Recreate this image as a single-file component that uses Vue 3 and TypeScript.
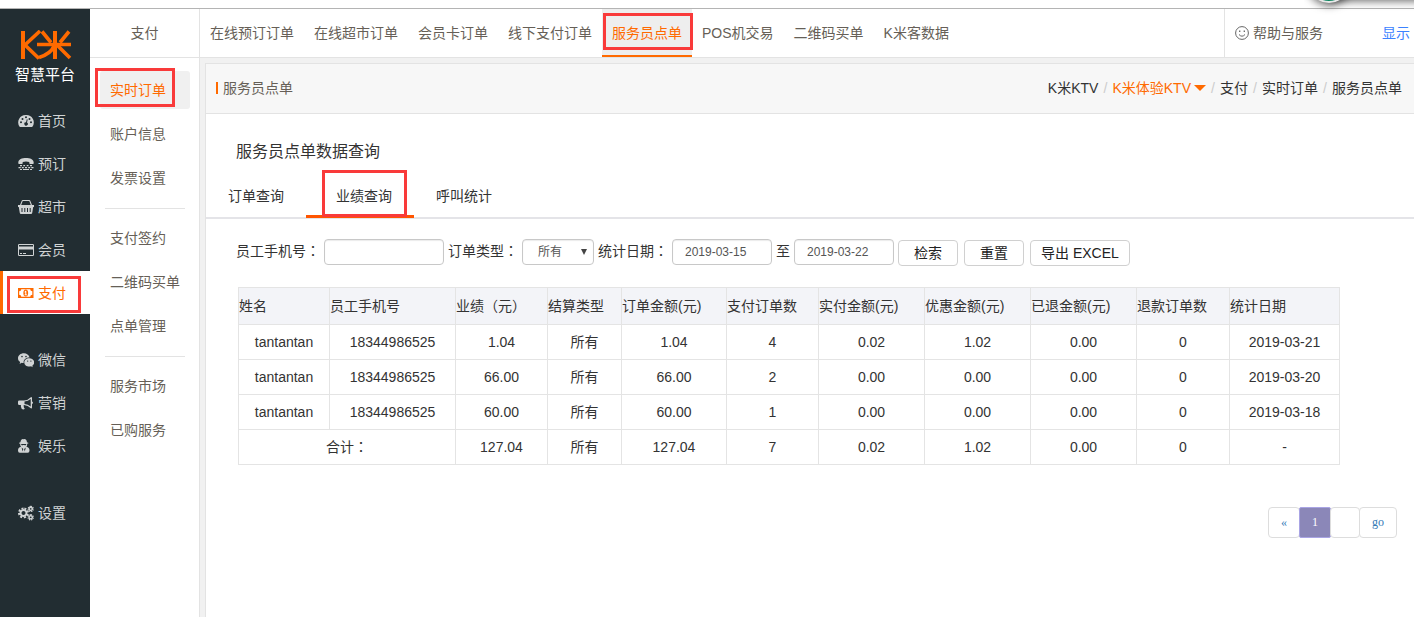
<script setup lang="ts">
import { ref } from 'vue'

interface SideItem { label: string; icon: string; active?: boolean }
interface SubItem { label: string; active?: boolean }

const sideGroups: SideItem[][] = [
  [
    { label: '首页', icon: 'gauge' },
    { label: '预订', icon: 'phone' },
    { label: '超市', icon: 'basket' },
    { label: '会员', icon: 'card' },
    { label: '支付', icon: 'money', active: true },
  ],
  [
    { label: '微信', icon: 'wechat' },
    { label: '营销', icon: 'horn' },
    { label: '娱乐', icon: 'agent' },
  ],
  [{ label: '设置', icon: 'cogs' }],
]

const subGroups: SubItem[][] = [
  [{ label: '实时订单', active: true }, { label: '账户信息' }, { label: '发票设置' }],
  [{ label: '支付签约' }, { label: '二维码买单' }, { label: '点单管理' }],
  [{ label: '服务市场' }, { label: '已购服务' }],
]

const topTabs: SubItem[] = [
  { label: '在线预订订单' },
  { label: '在线超市订单' },
  { label: '会员卡订单' },
  { label: '线下支付订单' },
  { label: '服务员点单', active: true },
  { label: 'POS机交易' },
  { label: '二维码买单' },
  { label: 'K米客数据' },
]

const queryTabs = ['订单查询', '业绩查询', '呼叫统计']
const currentTab = ref('业绩查询')

const phone = ref('')
const orderType = ref('所有')
const dateFrom = ref('2019-03-15')
const dateTo = ref('2019-03-22')
const pageInput = ref('')

const columns = [
  { key: 'name', label: '姓名', wide: false },
  { key: 'phone', label: '员工手机号', wide: false },
  { key: 'result', label: '业绩（元）', wide: true },
  { key: 'type', label: '结算类型', wide: false },
  { key: 'amount', label: '订单金额(元)', wide: false },
  { key: 'paid', label: '支付订单数', wide: false },
  { key: 'real', label: '实付金额(元)', wide: false },
  { key: 'discount', label: '优惠金额(元)', wide: false },
  { key: 'refund', label: '已退金额(元)', wide: false },
  { key: 'refunds', label: '退款订单数', wide: false },
  { key: 'date', label: '统计日期', wide: false },
]

const rows: string[][] = [
  ['tantantan', '18344986525', '1.04', '所有', '1.04', '4', '0.02', '1.02', '0.00', '0', '2019-03-21'],
  ['tantantan', '18344986525', '66.00', '所有', '66.00', '2', '0.00', '0.00', '0.00', '0', '2019-03-20'],
  ['tantantan', '18344986525', '60.00', '所有', '60.00', '1', '0.00', '0.00', '0.00', '0', '2019-03-18'],
]
const totals: string[] = ['127.04', '所有', '127.04', '7', '0.02', '1.02', '0.00', '0', '-']
</script>

<template>
  <div class="page">
    <div class="strip">
      <div class="bubble"><i></i></div>
    </div>
    <div class="shell">
      <aside class="side">
        <div class="logo">
          <svg width="54" height="30" viewBox="0 0 54 30" fill="none" stroke="#ff6a00" stroke-width="4">
            <path d="M5 1v28" />
            <path d="M22 1L8 14q-1 1 0 2l13 12.500" stroke-width="3.600" />
            <path d="M19 14.500h34" stroke-width="3.600" />
            <path d="M37 1v28" />
            <path d="M24 1.500l9 11M51 1.500l-9 11" stroke-width="3.600" />
            <path d="M36 16c-2 5-7 9-15 11.500M39 15l13 13" stroke-width="3.600" />
          </svg>
          <span>智慧平台</span>
        </div>
        <nav class="side-nav">
          <ul v-for="(group, gi) in sideGroups" :key="gi">
            <li v-for="item in group" :key="item.label">
              <a href="#" :class="{ active: item.active }">
                <svg class="ico" width="16" height="16" viewBox="0 0 16 16" fill="currentColor">
                  <template v-if="item.icon === 'gauge'">
                    <path fill-rule="evenodd" d="M8 2a7.400 7.400 0 0 0-6.500 11.500q.3.5.8.5h11.400q.5 0 .8-.5A7.400 7.400 0 0 0 8 2zM3 8.200a1 1 0 1 1 0 2 1 1 0 0 1 0-2zM4.500 4.900a1 1 0 1 1 0 2 1 1 0 0 1 0-2zM8 3.300a1 1 0 1 1 0 2 1 1 0 0 1 0-2zM11.500 4.900a1 1 0 1 1 0 2 1 1 0 0 1 0-2zM13 8.200a1 1 0 1 1 0 2 1 1 0 0 1 0-2zM8.800 6.200l.9.2-.7 3.100a1.700 1.700 0 1 1-1-.3z" />
                  </template>
                  <template v-else-if="item.icon === 'phone'">
                    <path d="M.3 6.800C.3 3.300 4 2 8 2s7.700 1.300 7.700 4.800v.5q0 .7-.7.7h-3q-.7 0-.7-.7V6Q8 5 4.700 6v1.300q0 .7-.7.700H1Q.3 8 .3 7.300z" />
                    <path d="M2 9h2v1.300H2zM5.300 9h1.800v1.300H5.300zM8.700 9h1.800v1.300H8.700zM12 9h2v1.300h-2zM.5 11h2.200v1.300H.5zM3.800 11h2v1.300h-2zM7 11h2v1.300H7zM10.200 11h2v1.300h-2zM13.300 11h2.200v1.300h-2.200zM2 13h2v1H2zM5 13h6v1H5zM12 13h2v1h-2z" />
                  </template>
                  <template v-else-if="item.icon === 'basket'">
                    <path fill-rule="evenodd" d="M0 6h2L3.500 2.200Q3.800 1 5 1h6q1.200 0 1.500 1.200L14 6h2v2h-.8l-1 6q-.2 1-1.200 1H3q-1 0-1.200-1l-1-6H0zm3.200 0h9.600l-1.300-3.400Q11.400 2 11 2H5q-.4 0-.5.600zM3.500 9v4h1V9zM6.300 9v4h1V9zM9 9v4h1V9zM11.700 9v4h1V9z" />
                  </template>
                  <template v-else-if="item.icon === 'card'">
                    <path fill-rule="evenodd" d="M1.300 2h13.400q1.300 0 1.300 1.300v9.400q0 1.300-1.300 1.300H1.300Q0 14 0 12.700V3.300Q0 2 1.300 2zM1 3v1.600h14V3zM1 7.500V13h14V7.500zM2 11h2v1H2zM5 11h3v1H5z" />
                  </template>
                  <template v-else-if="item.icon === 'money'">
                    <path fill-rule="evenodd" d="M0 3h15.500v10H0zM3.300 4.200A2.200 2.200 0 0 1 1.200 6.300v3.400a2.200 2.200 0 0 1 2.100 2.100h8.900a2.200 2.200 0 0 1 2.100-2.100V6.300a2.200 2.200 0 0 1-2.100-2.100z" />
                    <path fill-rule="evenodd" d="M7.750 4.500q2.400 0 2.400 3.500t-2.400 3.500T5.350 8t2.400-3.500zM6.600 6.700v.8h.7v2h-.8v.8h2.600v-.8h-.8V5.700h-.8z" />
                  </template>
                  <template v-else-if="item.icon === 'wechat'">
                    <path fill-rule="evenodd" d="M5.900 1.200C2.600 1.200 0 3.400 0 6.200c0 1.600.8 2.900 2.200 3.800l-.6 1.900 2.100-1.100c.8.2 1.300.3 2 .300-.7-3.200 2-5.800 5.900-5.700C11 3 8.600 1.200 5.900 1.200zM4 3.800a.8.800 0 1 1 0 1.600.8.800 0 0 1 0-1.600zM8 3.800a.8.800 0 1 1 0 1.600.8.800 0 0 1 0-1.600z" />
                    <path fill-rule="evenodd" d="M11.300 6.200c-2.800 0-5 1.900-5 4.200s2.200 4.200 5 4.200c.6 0 1.200-.2 1.700-.3l1.700.9-.4-1.500c1.100-.8 2-2 2-3.300 0-2.300-2.300-4.200-5-4.200zM9.700 8.400a.6.600 0 1 1 0 1.300.6.600 0 0 1 0-1.300zM12.900 8.400a.6.600 0 1 1 0 1.300.6.600 0 0 1 0-1.300z" />
                  </template>
                  <template v-else-if="item.icon === 'horn'">
                    <path fill-rule="evenodd" d="M13.200 2q.8 0 .8 1v3.600q1 .4 1 1.200t-1 1.200v3.500q0 1-.8 1Q9.700 10.500 6 10.100q-.9.700-.1 1.700-.5.700.9 1.900-1 1.200-3 .3Q2.500 11.500 2.900 10H1.200Q0 10 0 8.800V6.800Q0 5.500 1.200 5.500H6Q9.700 5.500 13.200 2zM12.700 4Q9.900 6.200 6.500 6.600v2.500q3.500.3 6.200 2.500z" />
                  </template>
                  <template v-else-if="item.icon === 'agent'">
                    <path fill-rule="evenodd" d="M3.600 1.500q1-.8 2.100-.2 1.100-.6 2.100.2.900.9 1.200 2.700 1.500.4 1.500.8t-1.300.8q.2 2-.8 3Q11.500 9.500 11.500 12.500q0 2.200-1.800 2.200H1.800Q0 14.700 0 12.500 0 9.500 3 8.800 2 7.800 2.200 5.800.9 5.400.9 5t1.500-.8q.3-1.800 1.200-2.700zM3.200 6v.7q1 1.100 2 .2h1q1 .9 2-.2V6zM3.600 9.600l1 4 .7-2.600zM7.800 9.600L6.100 11l.7 2.600z" />
                  </template>
                  <template v-else>
                    <path fill="none" stroke="currentColor" stroke-width="2" d="M5.500 5a3 3 0 1 0 .01 0z" />
                    <path fill="none" stroke="currentColor" stroke-width="2" stroke-dasharray="2 1.530" d="M5.500 3.500a4.500 4.500 0 1 0 .01 0z" />
                    <path fill="none" stroke="currentColor" stroke-width="1.400" d="M12.700 2.300a1.600 1.600 0 1 0 .01 0zM12.700 10.700a1.600 1.600 0 1 0 .01 0z" />
                    <path fill="none" stroke="currentColor" stroke-width="1.200" stroke-dasharray="1.200 .84" d="M12.700 1.300a2.600 2.600 0 1 0 .01 0zM12.700 9.700a2.600 2.600 0 1 0 .01 0z" />
                  </template>
                </svg>
                <span>{{ item.label }}</span>
              </a>
            </li>
          </ul>
        </nav>
      </aside>

      <aside class="sub">
        <h2>支付</h2>
        <nav>
          <ul v-for="(group, gi) in subGroups" :key="gi">
            <li v-for="item in group" :key="item.label">
              <a href="#" :class="{ active: item.active }">{{ item.label }}</a>
            </li>
          </ul>
        </nav>
      </aside>

      <div class="main">
        <header class="top">
          <nav>
            <a v-for="t in topTabs" :key="t.label" href="#" :class="{ active: t.active }">{{ t.label }}</a>
          </nav>
          <div class="help">
            <a href="#" class="help-link">
              <svg width="14" height="14" viewBox="0 0 14 14" fill="none" stroke="#666" stroke-width="1">
                <circle cx="7" cy="7" r="6.400" />
                <path d="M4 8.500q3 3.400 6 0" />
                <path d="M4.700 4.500v1.400M9.300 4.500v1.400" stroke-width="1.300" />
              </svg>
              帮助与服务
            </a>
            <a href="#" class="show">显示</a>
          </div>
        </header>

        <section class="panel">
          <div class="panel-head">
            <h1>服务员点单</h1>
            <nav class="crumbs">
              <a href="#">K米KTV</a><i>/</i>
              <a href="#" class="hot">K米体验KTV<b></b></a><i>/</i>
              <a href="#">支付</a><i>/</i>
              <a href="#">实时订单</a><i>/</i>
              <a href="#">服务员点单</a>
            </nav>
          </div>

          <h3>服务员点单数据查询</h3>
          <div class="tabs">
            <button
              v-for="t in queryTabs"
              :key="t"
              type="button"
              :class="{ active: t === currentTab }"
              @click="currentTab = t"
            >{{ t }}</button>
          </div>

          <form class="filters" @submit.prevent>
            <label for="phone">员工手机号<span class="colon">：</span></label>
            <input id="phone" v-model="phone" class="phone" type="text" />
            <label for="type">订单类型<span class="colon">：</span></label>
            <div class="select">
              <select id="type" v-model="orderType">
                <option>所有</option>
              </select>
            </div>
            <label for="from">统计日期<span class="colon">：</span></label>
            <input id="from" v-model="dateFrom" type="text" />
            <label for="to">至</label>
            <input id="to" v-model="dateTo" type="text" />
            <div class="actions">
              <button type="submit">检索</button>
              <button type="reset">重置</button>
              <button type="button">导出 EXCEL</button>
            </div>
          </form>

          <div class="grid">
            <table>
              <colgroup>
                <col v-for="c in columns" :key="c.key" :class="'c-' + c.key" />
              </colgroup>
              <thead>
                <tr>
                  <th v-for="c in columns" :key="c.key" scope="col" :class="{ centred: c.wide }">{{ c.label }}</th>
                </tr>
              </thead>
              <tbody>
                <tr v-for="(r, ri) in rows" :key="ri">
                  <td v-for="(v, vi) in r" :key="vi">{{ v }}</td>
                </tr>
                <tr>
                  <td colspan="2">合计<span class="colon">：</span></td>
                  <td v-for="(v, vi) in totals" :key="vi">{{ v }}</td>
                </tr>
              </tbody>
            </table>
          </div>

          <div class="pager">
            <button type="button">«</button>
            <button type="button" class="current">1</button>
            <input v-model="pageInput" type="text" aria-label="页码" />
            <button type="button" class="go">go</button>
          </div>
        </section>
      </div>
    </div>
  </div>
</template>

<style>
html,
body,
#app {
  height: 100%;
}
body {
  margin: 0;
  background: #fff;
}
</style>

<style scoped>
* {
  box-sizing: border-box;
}
.page {
  min-height: 100%;
  display: flex;
  flex-direction: column;
  font: 14px/20px "Liberation Sans", "Noto Sans CJK SC", sans-serif;
  color: #333;
}
ul {
  list-style: none;
  margin: 0;
  padding: 0;
}
h1,
h2,
h3 {
  margin: 0;
  font-weight: normal;
  font-size: 14px;
}
a {
  color: inherit;
  text-decoration: none;
}
button,
input,
select {
  font-family: inherit;
  margin: 0;
}
.strip {
  position: relative;
  height: 9px;
  border-bottom: 1px solid #b4b4b4;
}
.bubble {
  position: absolute;
  z-index: 2;
  top: 0;
  right: 0;
  width: 110px;
  height: 16px;
  overflow: hidden;
}
.bubble::before {
  content: "";
  position: absolute;
  top: -10px;
  left: 24px;
  right: -10px;
  height: 10px;
  box-shadow: 0 0 8px 1px rgba(0, 0, 0, 0.6);
}
.bubble i {
  position: absolute;
  left: 4px;
  top: -39px;
  width: 42px;
  height: 42px;
  border-radius: 50%;
  background: #0e8560;
  border: 2px solid #e8e8e8;
  box-shadow: 0 1px 8px 1px rgba(0, 0, 0, 0.6);
}
.shell {
  flex: 1;
  display: flex;
}
.side {
  width: 90px;
  flex: none;
  background: #222d32;
  color: #d0d3d4;
}
.logo {
  height: 90px;
  padding-top: 21px;
  display: flex;
  flex-direction: column;
  align-items: center;
  gap: 5px;
}
.logo span {
  color: #fff;
  font-size: 15px;
  line-height: 20px;
}
.side-nav {
  display: flex;
  flex-direction: column;
  gap: 24px;
}
.side-nav a {
  position: relative;
  display: flex;
  align-items: center;
  gap: 4px;
  height: 43px;
  padding-left: 18px;
}
.side-nav a.active {
  background: #fff;
  color: #ff6a00;
  border-left: 3px solid #ff6a00;
  padding-left: 15px;
}
.side-nav a.active::after {
  content: "";
  position: absolute;
  inset: 5px 9px 1px 4px;
  border: 3px solid #f93a3a;
}
.sub {
  width: 110px;
  flex: none;
  border-right: 1px solid #e3e3e3;
  background: #fff;
  color: #665f57;
}
.sub h2 {
  height: 49px;
  line-height: 48px;
  border-bottom: 1px solid #e3e3e3;
  text-align: center;
}
.sub nav {
  padding: 13px 9px 0 10px;
}
.sub ul {
  display: flex;
  flex-direction: column;
  gap: 6px;
}
.sub ul + ul::before {
  content: "";
  height: 1px;
  margin: 11px 5px 4px;
  background: #e3e3e3;
}
.sub a {
  position: relative;
  display: block;
  line-height: 38px;
  padding-left: 10px;
  border-radius: 3px;
}
.sub a.active {
  background: #f0f0f0;
  color: #ff6a00;
}
.sub a.active::after {
  content: "";
  position: absolute;
  inset: -3px 15px 2px -5px;
  border: 3px solid #f93a3a;
}
.main {
  flex: 1;
  min-width: 0;
  display: flex;
  flex-direction: column;
  background: #f1f1f1;
}
.top {
  height: 49px;
  display: flex;
  justify-content: space-between;
  background: #fff;
  border-bottom: 1px solid #e3e3e3;
  color: #665f57;
  white-space: nowrap;
}
.top nav {
  display: flex;
}
.top nav a {
  position: relative;
  padding: 0 10px;
  line-height: 48px;
}
.top nav a.active {
  background: #eee;
  color: #ff6a00;
  box-shadow: inset 0 -2px #ff6a00;
}
.top nav a.active::after {
  content: "";
  position: absolute;
  inset: 4px -1px 7px 1px;
  border: 3px solid #f93a3a;
}
.help {
  display: flex;
  align-items: center;
  justify-content: space-between;
  gap: 59px;
  padding: 0 4px 0 10px;
  border-left: 1px solid #e3e3e3;
}
.help-link {
  display: flex;
  align-items: center;
  gap: 4px;
}
.show {
  color: #3b82ff;
}
.panel {
  flex: 1;
  margin: 5px 0 0 5px;
  background: #fff;
  border: 1px solid #e3e3e3;
  border-width: 1px 0 0 1px;
}
.panel-head {
  height: 50px;
  display: flex;
  justify-content: space-between;
  align-items: center;
  padding: 0 12px 2px 10px;
  background: #f7f7f7;
  border-bottom: 1px solid #e3e3e3;
}
.panel-head h1 {
  display: flex;
  align-items: center;
  gap: 5px;
  color: #665f57;
}
.panel-head h1::before {
  content: "";
  width: 2px;
  height: 12px;
  background: #ff6a00;
}
.crumbs {
  display: flex;
}
.crumbs i {
  width: 14px;
  text-align: center;
  color: #ccc;
  font-style: normal;
}
.crumbs .hot {
  display: flex;
  align-items: center;
  gap: 3px;
  color: #ff6a00;
}
.crumbs b {
  border: 6px solid transparent;
  border-top-color: #ff6a00;
  border-bottom: 0;
}
h3 {
  padding: 28px 30px 0;
  font-size: 16px;
  line-height: 20px;
}
.tabs {
  display: flex;
  margin-top: 10px;
  border-bottom: 2px solid #e4e4e8;
}
.tabs button {
  position: relative;
  padding: 2px 22px 0;
  height: 45px;
  border: 0;
  background: none;
  font-size: 14px;
  line-height: 20px;
  color: #333;
}
.tabs button.active {
  padding-left: 30px;
}
.tabs button.active::before {
  content: "";
  position: absolute;
  left: 0;
  right: 0;
  bottom: -1px;
  height: 3px;
  background: #ff5500;
}
.tabs button.active::after {
  content: "";
  position: absolute;
  inset: -2px 7px 0 16px;
  border: 3px solid #f93a3a;
}
.filters {
  display: flex;
  flex-wrap: wrap;
  align-items: flex-start;
  gap: 4px;
  padding: 20px 30px 0;
}
.filters label {
  line-height: 24px;
}
.colon,
.centred {
  font-family: "Liberation Sans", "Noto Sans CJK TC", sans-serif;
}
.filters input,
.filters select {
  width: 100px;
  height: 26px;
  padding: 0 12px;
  border: 1px solid #c8c8c8;
  border-radius: 4px;
  background: #fff;
  color: #555;
  font-size: 12px;
  box-shadow: inset 0 1px 1px rgba(0, 0, 0, 0.08);
}
.filters .phone {
  width: 120px;
}
.select {
  position: relative;
}
.filters select {
  display: block;
  width: 72px;
  padding: 0 15px;
  appearance: none;
}
.select::after {
  content: "";
  position: absolute;
  right: 7px;
  top: 10px;
  border: 3px solid transparent;
  border-top: 6px solid #444;
  border-bottom: 0;
  pointer-events: none;
}
.actions {
  display: flex;
  gap: 6px;
  padding-top: 1px;
}
.actions button {
  height: 26px;
  min-width: 60px;
  padding: 0 10px;
  border: 1px solid #d0d0d0;
  border-radius: 4px;
  background: #fff;
  color: #222;
  font-size: 14px;
  line-height: 24px;
}
.grid {
  margin: 21px 74px 0 32px;
}
table {
  width: 100%;
  table-layout: fixed;
  border-collapse: collapse;
}
th,
td {
  height: 35px;
  padding: 0;
  border: 1px solid #e4e4e4;
  text-align: center;
  white-space: nowrap;
}
th {
  height: 37px;
  background: #f3f4f8;
  font-weight: normal;
  text-align: left;
}
.c-name { width: 91px; }
.c-phone { width: 126px; }
.c-result { width: 92px; }
.c-type { width: 74px; }
.c-amount { width: 105px; }
.c-paid { width: 92px; }
.c-real { width: 106px; }
.c-discount { width: 106px; }
.c-refund { width: 106px; }
.c-refunds { width: 93px; }
.c-date { width: 110px; }
.pager {
  display: flex;
  justify-content: flex-end;
  padding: 42px 17px 0;
}
.pager button,
.pager input {
  width: 32px;
  height: 31px;
  padding: 0;
  border: 1px solid #ddd;
  border-radius: 4px;
  background: #fff;
  color: #337ab7;
  font: 12px/29px "Liberation Serif", serif;
}
.pager input {
  width: 30px;
}
.pager * + * {
  margin-left: -1px;
}
.pager .current {
  border-color: #a9a4e4;
  border-radius: 2px;
  background: #8b87b8;
  color: #fff;
}
.pager .go {
  width: 38px;
}
</style>
